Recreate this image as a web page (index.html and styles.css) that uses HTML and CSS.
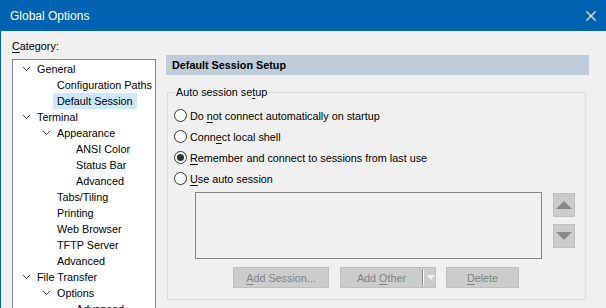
FILE: index.html
```html
<!DOCTYPE html>
<html lang="en">
<head>
    <meta charset="UTF-8">
    <title>Global Options</title>
    <link rel="stylesheet" href="styles.css">
</head>
<body>
    <div class="window">
        <div class="titlebar">
            <span class="title">Global Options</span>
            <svg class="close" width="10" height="10" viewBox="0 0 10 10">
                <path d="M0.5 0.5 L9.5 9.5 M9.5 0.5 L0.5 9.5" stroke="#fff" stroke-width="1.1" fill="none"/>
            </svg>
        </div>

        <div class="content">
            <div class="category">
                <div class="category-label"><u>C</u>ategory:</div>
                <div class="tree">
                    <div class="node l0"><span class="twist"><svg width="9" height="6" viewBox="0 0 9 6"><path d="M1 1 L4.5 4.5 L8 1" stroke="#444" fill="none"/></svg></span><span class="name">General</span></div>
                    <div class="node l1"><span class="twist"></span><span class="name">Configuration Paths</span></div>
                    <div class="node l1"><span class="twist"></span><span class="name selected">Default Session</span></div>
                    <div class="node l0"><span class="twist"><svg width="9" height="6" viewBox="0 0 9 6"><path d="M1 1 L4.5 4.5 L8 1" stroke="#444" fill="none"/></svg></span><span class="name">Terminal</span></div>
                    <div class="node l1"><span class="twist"><svg width="9" height="6" viewBox="0 0 9 6"><path d="M1 1 L4.5 4.5 L8 1" stroke="#444" fill="none"/></svg></span><span class="name">Appearance</span></div>
                    <div class="node l2"><span class="twist"></span><span class="name">ANSI Color</span></div>
                    <div class="node l2"><span class="twist"></span><span class="name">Status Bar</span></div>
                    <div class="node l2"><span class="twist"></span><span class="name">Advanced</span></div>
                    <div class="node l1"><span class="twist"></span><span class="name">Tabs/Tiling</span></div>
                    <div class="node l1"><span class="twist"></span><span class="name">Printing</span></div>
                    <div class="node l1"><span class="twist"></span><span class="name">Web Browser</span></div>
                    <div class="node l1"><span class="twist"></span><span class="name">TFTP Server</span></div>
                    <div class="node l1"><span class="twist"></span><span class="name">Advanced</span></div>
                    <div class="node l0"><span class="twist"><svg width="9" height="6" viewBox="0 0 9 6"><path d="M1 1 L4.5 4.5 L8 1" stroke="#444" fill="none"/></svg></span><span class="name">File Transfer</span></div>
                    <div class="node l1"><span class="twist"><svg width="9" height="6" viewBox="0 0 9 6"><path d="M1 1 L4.5 4.5 L8 1" stroke="#444" fill="none"/></svg></span><span class="name">Options</span></div>
                    <div class="node l2"><span class="twist"></span><span class="name">Advanced</span></div>
                </div>
            </div>

            <div class="panel">
                <div class="panel-head">Default Session Setup</div>
                <fieldset class="group">
                    <legend>Auto session se<u>t</u>up</legend>
                    <div class="radio"><span class="circle"></span><span class="text">Do <u>n</u>ot connect automatically on startup</span></div>
                    <div class="radio"><span class="circle"></span><span class="text">Conn<u>e</u>ct local shell</span></div>
                    <div class="radio"><span class="circle checked"></span><span class="text"><u>R</u>emember and connect to sessions from last use</span></div>
                    <div class="radio"><span class="circle"></span><span class="text"><u>U</u>se auto session</span></div>

                    <div class="sessions">
                        <div class="session-list"></div>
                        <div class="order">
                            <div class="arrow-btn"><span class="tri up"></span></div>
                            <div class="arrow-btn"><span class="tri down"></span></div>
                        </div>
                    </div>

                    <div class="actions">
                        <div class="btn add-session"><span><u>A</u>dd Session...</span></div>
                        <div class="btn add-other">
                            <span class="btn-label">Add <u>O</u>ther</span>
                            <span class="split"></span>
                            <span class="drop"></span>
                        </div>
                        <div class="btn delete"><span><u>D</u>elete</span></div>
                    </div>
                </fieldset>
            </div>
        </div>
    </div>
</body>
</html>
```

FILE: styles.css
```css
* {
    box-sizing: border-box;
    margin: 0;
    padding: 0;
}

body {
    font-family: "Liberation Sans", Arial, sans-serif;
    font-size: 10.8px;
    color: #000;
    background: #f0f0f0;
}

u {
    text-decoration: underline;
    text-underline-offset: 2px;
}

.window {
    width: 606px;
    height: 308px;
    overflow: hidden;
    border-left: 1px solid #0063b1;
    background: #f0f0f0;
}

.titlebar {
    height: 31px;
    background: #0063b1;
    color: #fff;
    display: flex;
    align-items: center;
    justify-content: space-between;
    padding: 0 10px 0 9px;
}

.title {
    font-size: 12px;
}

.content {
    display: flex;
    gap: 10px;
    padding: 7px 0 0 11px;
}

/* category tree */
.category {
    width: 144px;
    flex: none;
}

.category-label {
    line-height: 16px;
    margin-bottom: 5px;
}

.tree {
    height: 260px;
    background: #fff;
    border: 1px solid #828790;
    padding-top: 1px;
    overflow: hidden;
}

.node {
    height: 16px;
    line-height: 16px;
    white-space: nowrap;
}

.node.l0 { padding-left: 7px; }
.node.l1 { padding-left: 27px; }
.node.l2 { padding-left: 46px; }

.twist {
    display: inline-block;
    width: 13px;
    height: 16px;
    vertical-align: top;
    padding: 5px 0 0 2px;
}

.twist svg {
    display: block;
}

.name {
    display: inline-block;
    vertical-align: top;
    padding: 0 4px;
}

.name.selected {
    background: #cce8ff;
}

/* right panel */
.panel {
    width: 423px;
    flex: none;
    padding-top: 17px;
}

.panel-head {
    height: 20px;
    line-height: 20px;
    background: #bfcddb;
    font-weight: bold;
    padding-left: 6px;
}

.group {
    margin: 9px 3px 0 1px;
    border: 1px solid #dcdcdc;
    padding: 5px 6px 11px 6px;
}

.group legend {
    margin-left: 1px;
    padding: 0 1px;
    line-height: 16px;
}

.radio {
    display: flex;
    align-items: center;
    height: 21px;
    white-space: nowrap;
}

.circle {
    width: 13px;
    height: 13px;
    border: 1px solid #333;
    border-radius: 50%;
    background: #fff;
    margin-right: 3px;
    display: flex;
    align-items: center;
    justify-content: center;
    flex: none;
}

.circle.checked::after {
    content: "";
    width: 7px;
    height: 7px;
    border-radius: 50%;
    background: #333;
}

.sessions {
    display: flex;
    gap: 11px;
    margin: 3px 0 0 21px;
}

.session-list {
    width: 347px;
    height: 67px;
    border: 1px solid #868686;
    background: #f0f0f0;
}

.order {
    display: flex;
    flex-direction: column;
    gap: 7px;
    padding-top: 1px;
}

.arrow-btn {
    width: 22px;
    height: 24px;
    background: #cccccc;
    border: 1px solid #bfbfbf;
    display: flex;
    align-items: center;
    justify-content: center;
}

.tri {
    width: 0;
    height: 0;
    border-left: 8px solid transparent;
    border-right: 8px solid transparent;
}

.tri.up {
    border-bottom: 8px solid #8a8a8a;
}

.tri.down {
    border-top: 8px solid #8a8a8a;
}

.actions {
    display: flex;
    gap: 11px;
    margin: 8px 0 0 59px;
}

.btn {
    height: 21px;
    background: #cccccc;
    border: 1px solid #bfbfbf;
    color: #838383;
    display: flex;
    align-items: center;
    justify-content: center;
    white-space: nowrap;
}

.add-session { width: 96px; }
.delete { width: 73px; margin-left: -1px; }

.add-other {
    width: 96px;
    justify-content: flex-start;
}

.add-other .btn-label {
    width: 81px;
    text-align: center;
}

.split {
    width: 2px;
    height: 15px;
    border-left: 1px solid #8a8a8a;
    border-right: 1px solid #fafafa;
}

.drop {
    margin-left: 3px;
    width: 0;
    height: 0;
    border-left: 4px solid transparent;
    border-right: 4px solid transparent;
    border-top: 5px solid #f4f4f4;
}
```
